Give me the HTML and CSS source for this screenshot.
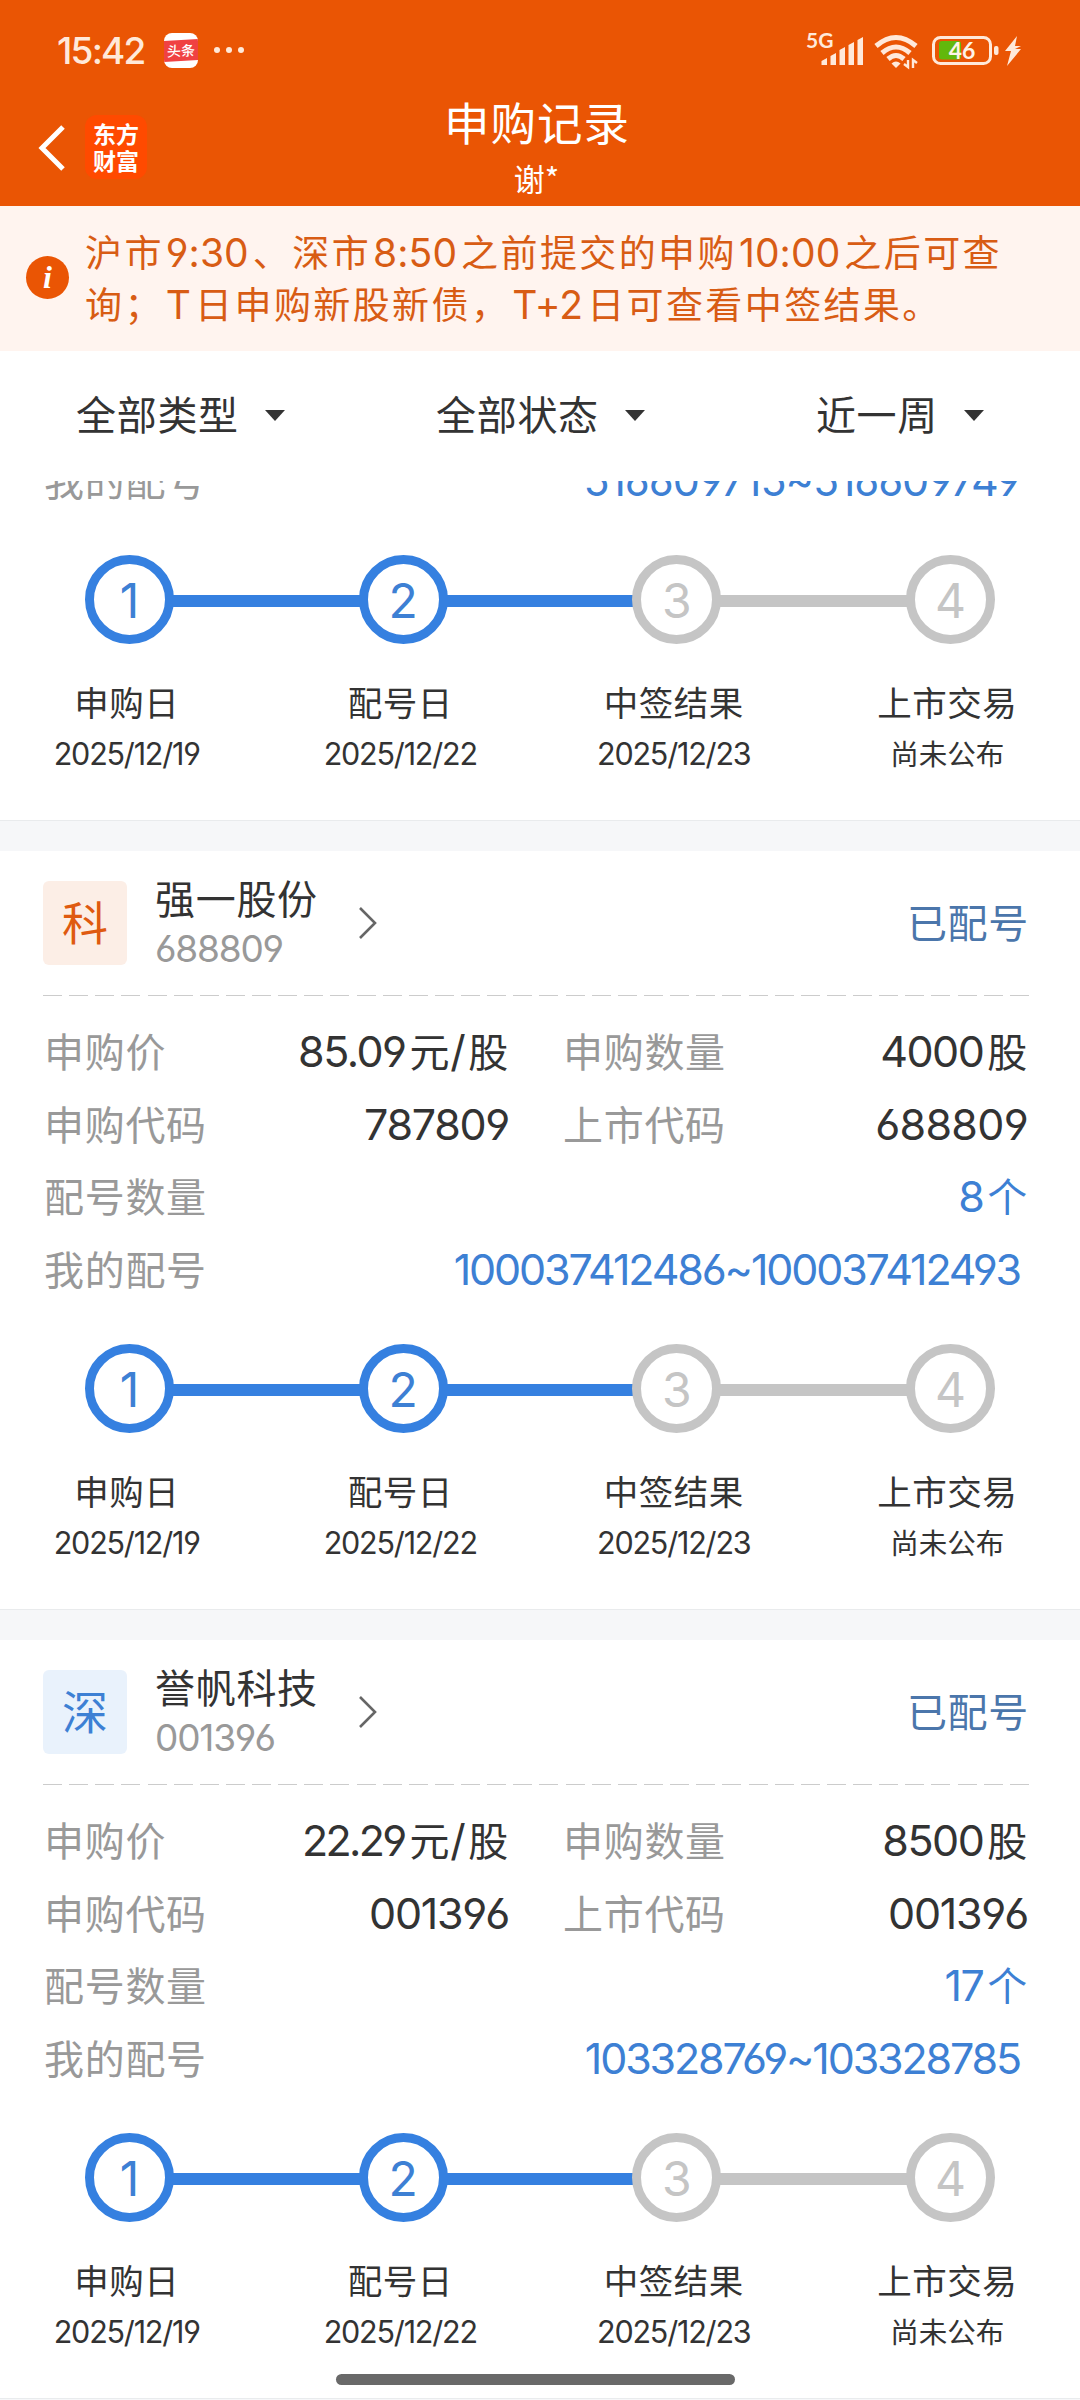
FILE: index.html
```html
<!DOCTYPE html>
<html lang="zh-CN">
<head>
<meta charset="utf-8">
<title>申购记录</title>
<link rel="stylesheet" href="styles.css">
</head>
<body>
<div class="screen">
  <header class="top">
    <div class="status">
      <span class="time">15:42</span>
      <span class="news"><b>头条</b></span>
      <span class="dots"><i></i><i></i><i></i></span>
      <svg class="sysicons" width="222" height="44" viewBox="0 0 222 44">
        <text x="0" y="20" class="net">5G</text>
        <g fill="#ffe9da">
          <path d="M15.500 37v-4l5.500-3v7h-5.500zM24.500 37v-9l5.500-3v12h-5.500zM33.500 37V22l5.500-3v18h-5.500zM42.500 37V17l5.500-3v23h-5.500zM51.500 37V12l5.500-3v28h-5.500z"/>
          <path d="M90 40l-4.500-4.500q4.500-4 9 0z"/>
          <path d="M102 32v7l-4-3M107 40v-8l4 3" stroke="#ffe9da" stroke-width="2.4" fill="none"/>
          <rect x="188" y="18" width="4.500" height="9" rx="2"/>
          <path d="M211 8l-12 15h6l-4 15 14-17h-6l6-3h-6z"/>
        </g>
        <g fill="none" stroke="#ffe9da" stroke-width="5">
          <path d="M70 18Q90 1 110 18"/>
          <path d="M76 25Q90 13 104 25"/>
          <path d="M82 31Q90 24 98 31"/>
        </g>
        <rect x="133" y="13" width="22" height="18.500" rx="3" fill="#62b80c"/>
        <rect x="127.500" y="9.500" width="57" height="26" rx="7" fill="none" stroke="#ffe9da" stroke-width="3"/>
        <text x="156" y="31" class="bat" text-anchor="middle">46</text>
      </svg>
    </div>
    <div class="nav">
      <svg class="back" width="28" height="46" viewBox="0 0 28 46"><path d="M25 2L4 23l21 21" fill="none" stroke="#fff" stroke-width="5"/></svg>
      <span class="logo"><b>东方</b><b>财富</b></span>
      <div class="titles"><h1>申购记录</h1><p>谢*</p></div>
    </div>
  </header>

  <section class="notice">
    <span class="info"><b>i</b></span>
    <p>沪市<span class="n">9:30</span>、深市<span class="n">8:50</span>之前提交的申购<span class="n">10:00</span>之后可查<br>询；<span class="n">T</span>日申购新股新债，<span class="n">T+2</span>日可查看中签结果。</p>
  </section>

  <nav class="filters">
    <span>全部类型<i></i></span><span>全部状态<i></i></span><span>近一周<i></i></span>
  </nav>

  <main class="list">
    <article class="card cut">
      <div class="row"><span class="k">我的配号</span><span class="v link long">516609715~516609749</span></div>
      <div class="steps">
        <div class="track"><b class="on">1</b><i class="on"></i><b class="on">2</b><i class="on"></i><b>3</b><i></i><b>4</b></div>
        <div class="labels">
          <div><span>申购日</span><em>2025/12/19</em></div><div><span>配号日</span><em>2025/12/22</em></div><div><span>中签结果</span><em>2025/12/23</em></div><div><span>上市交易</span><em class="cn">尚未公布</em></div>
        </div>
      </div>
    </article>

    <article class="card">
      <div class="head">
        <span class="badge ke">科</span>
        <div class="name"><strong>强一股份</strong><small>688809</small></div>
        <svg class="go" width="20" height="34" viewBox="0 0 20 34"><path d="M2 2l15 15L2 32" fill="none" stroke="#666" stroke-width="2.600"/></svg>
        <span class="state">已配号</span>
      </div>
      <div class="dash"></div>
      <div class="rows">
        <div class="row"><span class="k">申购价</span><span class="v half"><span class="n">85.09</span>元<span class="n">/</span>股</span><span class="k">申购数量</span><span class="v"><span class="n">4000</span>股</span></div>
        <div class="row"><span class="k">申购代码</span><span class="v half"><span class="n e">787809</span></span><span class="k">上市代码</span><span class="v"><span class="n e wide">688809</span></span></div>
        <div class="row"><span class="k">配号数量</span><span class="v link"><span class="n">8</span>个</span></div>
        <div class="row"><span class="k">我的配号</span><span class="v link long dense">100037412486~100037412493</span></div>
      </div>
      <div class="steps">
        <div class="track"><b class="on">1</b><i class="on"></i><b class="on">2</b><i class="on"></i><b>3</b><i></i><b>4</b></div>
        <div class="labels">
          <div><span>申购日</span><em>2025/12/19</em></div><div><span>配号日</span><em>2025/12/22</em></div><div><span>中签结果</span><em>2025/12/23</em></div><div><span>上市交易</span><em class="cn">尚未公布</em></div>
        </div>
      </div>
    </article>

    <article class="card">
      <div class="head">
        <span class="badge shen">深</span>
        <div class="name"><strong>誉帆科技</strong><small>001396</small></div>
        <svg class="go" width="20" height="34" viewBox="0 0 20 34"><path d="M2 2l15 15L2 32" fill="none" stroke="#666" stroke-width="2.600"/></svg>
        <span class="state">已配号</span>
      </div>
      <div class="dash"></div>
      <div class="rows">
        <div class="row"><span class="k">申购价</span><span class="v half"><span class="n tight">22.29</span>元<span class="n">/</span>股</span><span class="k">申购数量</span><span class="v"><span class="n">8500</span>股</span></div>
        <div class="row"><span class="k">申购代码</span><span class="v half"><span class="n e">001396</span></span><span class="k">上市代码</span><span class="v"><span class="n e">001396</span></span></div>
        <div class="row"><span class="k">配号数量</span><span class="v link"><span class="n">17</span>个</span></div>
        <div class="row"><span class="k">我的配号</span><span class="v link long dense">103328769~103328785</span></div>
      </div>
      <div class="steps">
        <div class="track"><b class="on">1</b><i class="on"></i><b class="on">2</b><i class="on"></i><b>3</b><i></i><b>4</b></div>
        <div class="labels">
          <div><span>申购日</span><em>2025/12/19</em></div><div><span>配号日</span><em>2025/12/22</em></div><div><span>中签结果</span><em>2025/12/23</em></div><div><span>上市交易</span><em class="cn">尚未公布</em></div>
        </div>
      </div>
    </article>
  </main>
  <div class="homebar"></div>
</div>
</body>
</html>
```
FILE: styles.css
```css
* { box-sizing: border-box; margin: 0; padding: 0; }
body { background: #fff; font-family: "Noto Sans CJK SC", sans-serif; color: #333; }
i, em { font-style: normal; }
.screen { position: relative; width: 1080px; height: 2400px; overflow: hidden; display: flex; flex-direction: column; }
.n, .long, .time, small, em, .track b { font-family: Inter, sans-serif; font-weight: 400; font-feature-settings: "cv03", "cv04", "calt" 0; }

/* header */
.top { height: 206px; background: #ea5504; color: #fff; }
.status { height: 100px; padding-left: 57px; display: flex; align-items: center; }
.time { width: 107px; font-size: 37px; font-weight: 500; letter-spacing: -1.8px; color: #ffe9da; }
.news { width: 34px; height: 35px; border-radius: 8px; background: #fff; display: flex; align-items: center; overflow: hidden; }
.news b { width: 34px; height: 21px; line-height: 20px; font-size: 14px; font-weight: 500; text-align: center; background: #f04142; transform: skewY(-3deg); }
.dots { display: flex; gap: 6px; margin-left: 16px; }
.dots i { width: 6px; height: 6px; border-radius: 50%; background: #ffe9da; }
.sysicons { margin-left: 562px; }
.net { font: 700 21px Lato, sans-serif; fill: #ffe9da; }
.bat { font: 700 23px Lato, sans-serif; fill: #fff3e8; }
.nav { height: 106px; padding-left: 38px; display: flex; align-items: flex-start; }
.back { margin-top: 25px; }
.logo { width: 62px; height: 64px; margin: 15px 0 0 19px; padding-top: 5px; border-radius: 12px; background: #ff4a00; font-size: 23px; line-height: 27px; text-align: center; }
.logo b { display: block; font-weight: 700; }
.titles { width: 300px; margin-left: 240px; text-align: center; }
.titles h1 { height: 54px; line-height: 43px; font-size: 45.500px; font-weight: 400; letter-spacing: 1px; }
.titles p { font-size: 31px; line-height: 47px; margin-left: -1px; }

/* notice */
.notice { height: 145px; padding: 20px 0 0 26px; background: #fff4ef; display: flex; color: #d85c14; }
.info { width: 43px; height: 43px; margin: 30px 16px 0 0; border-radius: 50%; background: #ea5504; color: #fff; display: flex; align-items: center; justify-content: center; font: italic 900 32px "Liberation Serif", serif; }
.notice p { font-size: 37px; line-height: 51.500px; letter-spacing: 2.400px; white-space: nowrap; }
.notice .n { font-size: 39px; margin: 0 4px 0 2px; letter-spacing: 0.100px; line-height: 1; }

/* filters */
.filters { height: 130px; padding: 0 96px 6px 76px; display: grid; grid-template-columns: 360px 360px 1fr; align-items: center; font-size: 40px; letter-spacing: 0.700px; }
.filters span { display: flex; align-items: center; }
.filters span:last-child { justify-content: flex-end; }
.filters i { margin: 5px 0 0 26px; border: 10px solid transparent; border-top: 11px solid #333; border-bottom: 0; }

/* cards */
.list { flex: 1; overflow: hidden; }
.card { height: 789px; border-bottom: 30px solid #f6f7f9; box-shadow: inset 0 -1px #e9ebed; }
.card.cut { display: flow-root; height: 370px; }
.cut .row { height: 72px; margin-top: -38px; }
.head { height: 144px; padding: 0 51px 0 43px; display: flex; align-items: center; }
.badge { width: 84px; height: 84px; border-radius: 6px; font-size: 46px; line-height: 79px; text-align: center; }
.ke { background: #fceee6; color: #df5a10; }
.shen { background: #e9f2fc; color: #3d80d4; }
.name { width: 202px; padding-top: 4px; margin-left: 28px; display: flex; flex-direction: column; }
.name strong { font-size: 40px; font-weight: 400; letter-spacing: 0.700px; line-height: 48px; }
.name small { font-size: 37px; line-height: 56px; letter-spacing: -1.200px; color: #999; }
.go { margin-left: 1px; }
.state { margin: -4px 0 0 auto; font-size: 40px; letter-spacing: 0.700px; color: #4b76ab; }
.dash { height: 1px; margin: 0 51px 0 43px; background: repeating-linear-gradient(90deg, #ccc 0 19px, transparent 19px 26.130px); }
.rows { padding-top: 18px; }
.row { height: 72.500px; padding: 0 52px 0 44px; display: flex; align-items: center; font-size: 40px; letter-spacing: 0.700px; line-height: 60px; }
.k { width: 190px; color: #999; }
.v { flex: 1; text-align: right; }
.half { flex: 0 0 275px; margin-right: 54px; }
.row .n { font-size: 43px; letter-spacing: -1.500px; margin-right: 4px; line-height: 1; }
.row .tight { letter-spacing: -2.700px; margin-right: 5px; }
.row .e { margin-right: 0; letter-spacing: -1.300px; }
.row .wide { letter-spacing: -0.700px; }
.link { color: #3d80d4; }
.row .long { font-size: 43px; letter-spacing: -1.100px; padding: 2px 8px 0 0; }
.row .dense { letter-spacing: -2.150px; }

/* progress */
.steps { padding-top: 40px; }
.track { display: flex; align-items: center; padding: 0 85px; }
.track b { width: 89px; height: 89px; border: 9px solid #c5c5c5; border-radius: 50%; color: #c5c5c5; font-size: 48px; line-height: 73px; text-align: center; }
.track i { flex: 1; height: 12px; margin: 2px -2px 0; background: #c5c5c5; }
.track b.on { border-color: #3580e0; color: #3d80d4; }
.track i.on { background: #3580e0; }
.labels { display: grid; grid-template-columns: repeat(4, 273.500px); margin: 32px 0 0 -10px; text-align: center; }
.labels span, .labels em { display: block; height: 51px; line-height: 51px; }
.labels span { font-size: 34.500px; letter-spacing: 0.500px; }
.labels em { font-size: 30.500px; letter-spacing: -1.200px; line-height: 53px; }
.labels .cn { font-family: "Noto Sans CJK SC", sans-serif; font-size: 28.500px; letter-spacing: 0; line-height: 51px; }

.homebar { position: absolute; left: 336px; top: 2374px; width: 399px; height: 11px; border-radius: 6px; background: #696969; }
```
